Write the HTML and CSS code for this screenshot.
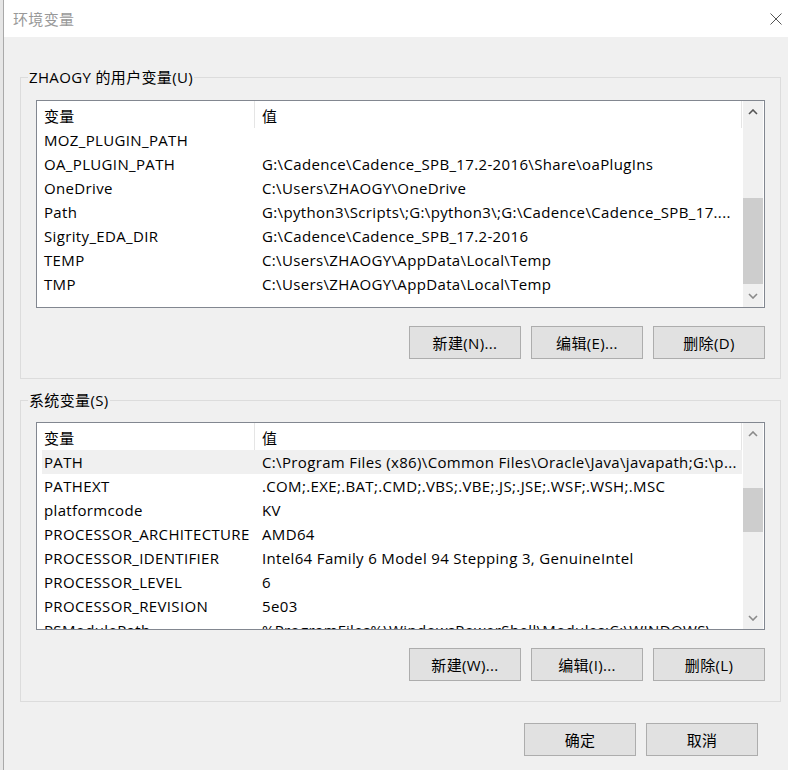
FILE: index.html
```html
<!DOCTYPE html>
<html lang="zh-CN">

<head>
  <meta charset="UTF-8">
  <title>环境变量</title>
  <link rel="stylesheet" href="styles.css">
</head>

<body>
  <div class="desk"></div>
  <div class="dialog">
    <div class="titlebar">
      <span class="title">环境变量</span>
      <svg class="close" width="12" height="12" viewBox="0 0 12 12">
        <path d="M0.5 0.5 L11.5 11.5 M11.5 0.5 L0.5 11.5" stroke="#555" stroke-width="1" fill="none" />
      </svg>
    </div>

    <div class="content">
      <!-- 用户变量 -->
      <fieldset class="group group-user">
        <legend>ZHAOGY 的用户变量(U)</legend>
        <div class="listbox">
          <div class="list">
            <div class="list-head">
              <div class="col col-name">变量</div>
              <div class="col col-value">值</div>
            </div>
            <div class="row"><span class="name">MOZ_PLUGIN_PATH</span><span class="value"></span></div>
            <div class="row"><span class="name">OA_PLUGIN_PATH</span><span class="value">G:\Cadence\Cadence_SPB_17.2-2016\Share\oaPlugIns</span></div>
            <div class="row"><span class="name">OneDrive</span><span class="value">C:\Users\ZHAOGY\OneDrive</span></div>
            <div class="row"><span class="name">Path</span><span class="value">G:\python3\Scripts\;G:\python3\;G:\Cadence\Cadence_SPB_17....</span></div>
            <div class="row"><span class="name">Sigrity_EDA_DIR</span><span class="value">G:\Cadence\Cadence_SPB_17.2-2016</span></div>
            <div class="row"><span class="name">TEMP</span><span class="value">C:\Users\ZHAOGY\AppData\Local\Temp</span></div>
            <div class="row"><span class="name">TMP</span><span class="value">C:\Users\ZHAOGY\AppData\Local\Temp</span></div>
          </div>
          <div class="scrollbar">
            <div class="arrow">
              <svg width="10" height="6" viewBox="0 0 10 6"><path d="M1 5 L5 1 L9 5" fill="none" stroke="#555" stroke-width="1.6" /></svg>
            </div>
            <div class="track"><div class="thumb" style="margin-top:75px;height:86px"></div></div>
            <div class="arrow">
              <svg width="10" height="6" viewBox="0 0 10 6"><path d="M1 1 L5 5 L9 1" fill="none" stroke="#8a8a8a" stroke-width="1.6" /></svg>
            </div>
          </div>
        </div>
        <div class="buttons">
          <button class="btn">新建(N)...</button>
          <button class="btn">编辑(E)...</button>
          <button class="btn">删除(D)</button>
        </div>
      </fieldset>

      <!-- 系统变量 -->
      <fieldset class="group group-system">
        <legend>系统变量(S)</legend>
        <div class="listbox">
          <div class="list">
            <div class="list-head">
              <div class="col col-name">变量</div>
              <div class="col col-value">值</div>
            </div>
            <div class="row selected"><span class="name">PATH</span><span class="value">C:\Program Files (x86)\Common Files\Oracle\Java\javapath;G:\p...</span></div>
            <div class="row"><span class="name">PATHEXT</span><span class="value">.COM;.EXE;.BAT;.CMD;.VBS;.VBE;.JS;.JSE;.WSF;.WSH;.MSC</span></div>
            <div class="row"><span class="name">platformcode</span><span class="value">KV</span></div>
            <div class="row"><span class="name">PROCESSOR_ARCHITECTURE</span><span class="value">AMD64</span></div>
            <div class="row"><span class="name">PROCESSOR_IDENTIFIER</span><span class="value">Intel64 Family 6 Model 94 Stepping 3, GenuineIntel</span></div>
            <div class="row"><span class="name">PROCESSOR_LEVEL</span><span class="value">6</span></div>
            <div class="row"><span class="name">PROCESSOR_REVISION</span><span class="value">5e03</span></div>
            <div class="row"><span class="name">PSModulePath</span><span class="value">%ProgramFiles%\WindowsPowerShell\Modules;C:\WINDOWS\...</span></div>
          </div>
          <div class="scrollbar">
            <div class="arrow">
              <svg width="10" height="6" viewBox="0 0 10 6"><path d="M1 5 L5 1 L9 5" fill="none" stroke="#8a8a8a" stroke-width="1.6" /></svg>
            </div>
            <div class="track"><div class="thumb" style="margin-top:43px;height:44px"></div></div>
            <div class="arrow">
              <svg width="10" height="6" viewBox="0 0 10 6"><path d="M1 1 L5 5 L9 1" fill="none" stroke="#8a8a8a" stroke-width="1.6" /></svg>
            </div>
          </div>
        </div>
        <div class="buttons">
          <button class="btn">新建(W)...</button>
          <button class="btn">编辑(I)...</button>
          <button class="btn">删除(L)</button>
        </div>
      </fieldset>

      <div class="footer">
        <button class="btn">确定</button>
        <button class="btn">取消</button>
      </div>
    </div>
  </div>
</body>

</html>
```

FILE: styles.css
```css
body {
  margin: 0;
  width: 788px;
  height: 770px;
  display: flex;
  overflow: hidden;
  font-family: "Open Sans", "Noto Sans CJK SC", sans-serif;
  font-size: 15px;
  letter-spacing: 0.35px;
  color: #000;
  background: #f0f0f0;
}

/* 背后窗口露出的一条 */
.desk {
  width: 3px;
  background: #e6e6e6;
}

.dialog {
  flex: 1;
  display: flex;
  flex-direction: column;
  border-left: 1px solid #a9a9a9;
  background: #f0f0f0;
}

.titlebar {
  height: 37px;
  display: flex;
  align-items: center;
  justify-content: space-between;
  padding: 0 6px 0 9px;
  background: #fff;
}

.title {
  color: #999;
}

.content {
  padding: 30px 7px 0 16px;
}

.group {
  margin: 0;
  min-width: 0;
  border: 1px solid #dcdcdc;
  padding: 13px 15px 19px;
}

.group legend {
  margin-left: -8px;
  padding: 0 1px;
  line-height: 20px;
}

.group-system {
  margin-top: 11px;
  padding-top: 12px;
  padding-bottom: 20px;
}

.listbox {
  display: flex;
  height: 208px;
  box-sizing: border-box;
  border: 1px solid #828790;
  background: #fff;
}

.list {
  width: 706px;
  overflow: hidden;
}

.list-head {
  display: flex;
}

.col {
  box-sizing: border-box;
  height: 27px;
  padding: 3px 0 0 7px;
  line-height: 24px;
  border-right: 1px solid #e5e5e5;
}

.col-name {
  width: 218px;
}

.col-value {
  width: 487px;
}

.row {
  display: flex;
  width: 700px;
  height: 24px;
  margin-left: 5px;
  line-height: 24px;
  white-space: nowrap;
}

.row.selected {
  background: #f0f0f0;
}

.row .name {
  width: 213px;
  flex-shrink: 0;
  box-sizing: border-box;
  padding-left: 2px;
  overflow: hidden;
}

.row .value {
  flex: 1;
  padding-left: 7px;
  overflow: hidden;
}

.scrollbar {
  width: 20px;
  margin-right: 1px;
  display: flex;
  flex-direction: column;
  background: #f0f0f0;
}

.arrow {
  height: 22px;
  display: flex;
  align-items: center;
  justify-content: center;
}

.track {
  flex: 1;
}

.thumb {
  background: #cdcdcd;
}

.buttons {
  display: flex;
  justify-content: flex-end;
  gap: 10px;
  margin-top: 18px;
}

.btn {
  width: 112px;
  height: 33px;
  padding: 0;
  font: inherit;
  letter-spacing: inherit;
  color: #000;
  background: #e1e1e1;
  border: 1px solid #adadad;
}

.footer {
  display: flex;
  justify-content: flex-end;
  gap: 10px;
  margin-top: 21px;
  padding-right: 23px;
}
```
